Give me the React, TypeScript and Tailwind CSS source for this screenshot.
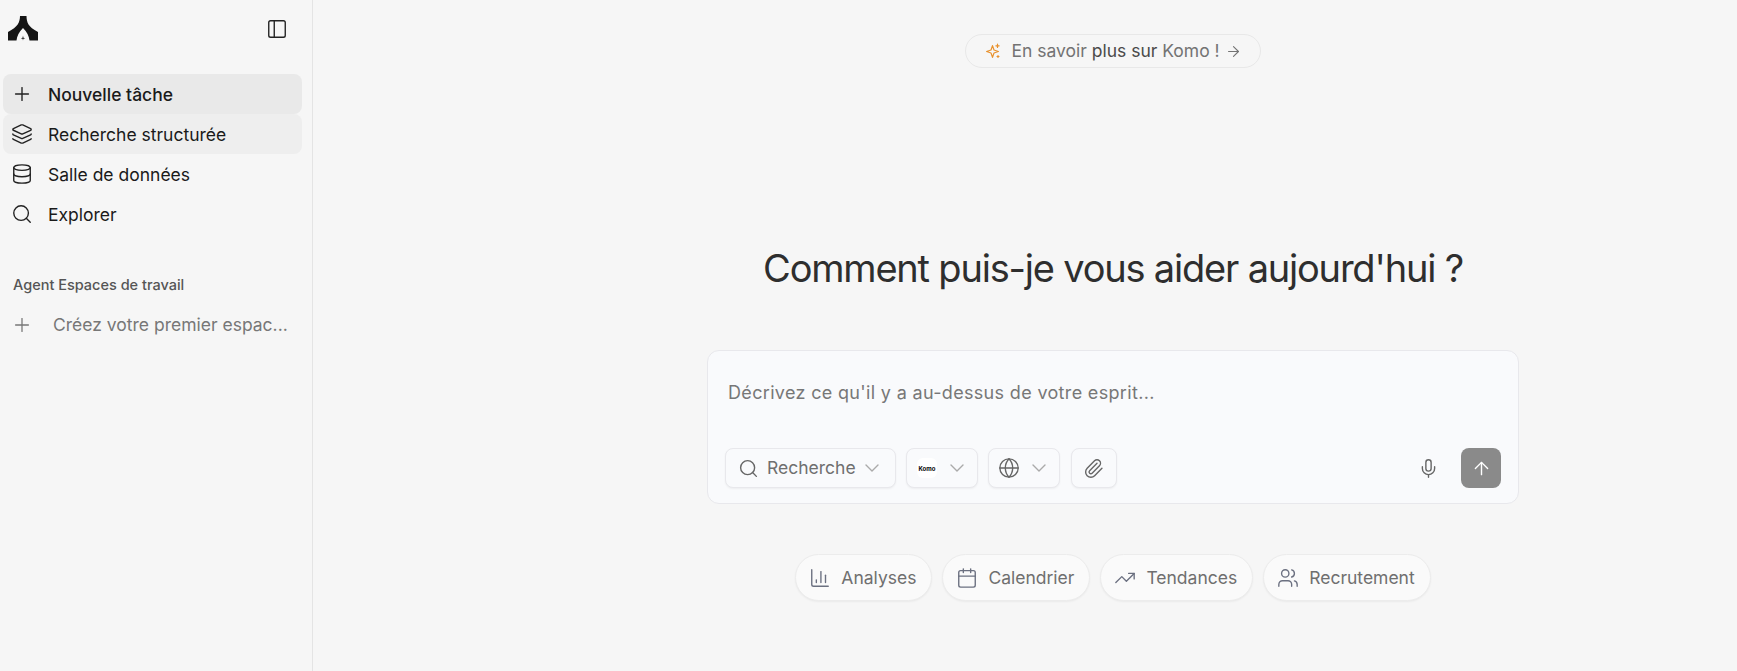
import { Plus, Layers, Database, Search, PanelLeft, ArrowRight, ChevronDown, Globe, Paperclip, Mic, ArrowUp, ChartColumn, Calendar, TrendingUp, Users } from "lucide-react";

const font = { fontFamily: "Inter, 'Liberation Sans', sans-serif" };

function Logo() {
  return (
    <svg width="30" height="25" viewBox="0 0 30 25" className="block">
      <path fill="#141414" d="M12 0H18.5C18.6 6 20 11 30 16V24.5H21.5C21 20 19 16 15 12C11 16 9 20 8.5 24.5H0V16C10 11 11.9 6 12 0Z" />
      <path fill="#141414" d="M15 19.6L15.4 21.8L17.2 22.3L15.4 22.8L15 24.6L14.6 22.8L12.8 22.3L14.6 21.8Z" />
    </svg>
  );
}

function Spark() {
  return (
    <svg width="16" height="16" viewBox="0 0 16 16" fill="none" stroke="#e8912d" strokeWidth="1.2" strokeLinejoin="round">
      <path d="M7.5 2.6L9 7L13.4 8.5L9 10L7.5 14.4L6 10L1.6 8.5L6 7Z" />
      <path d="M12.5 1.2V4.4M10.9 2.8H14.1" strokeLinecap="round" />
      <path d="M13 12.5V14.5M12 13.5H14" strokeLinecap="round" />
    </svg>
  );
}

function NavItem({ icon, label, cls }: { icon: React.ReactNode; label: string; cls: string }) {
  return (
    <div className={`flex h-10 items-center rounded-lg pl-[8px] ${cls}`}>
      <span className="flex w-[37px] shrink-0 items-center">{icon}</span>
      <span className="pt-[2px] text-[#1a1a1a]">{label}</span>
    </div>
  );
}

function Chip({ icon, label }: { icon: React.ReactNode; label: string }) {
  return (
    <div className="flex h-[47px] items-center gap-[10px] rounded-full border border-[#ececec] bg-[#fafafa] pl-[13px] pr-[15px] shadow-[0_1px_2px_rgba(0,0,0,0.05)]">
      {icon}
      <span className="pt-[1px] text-[17.5px] text-[#6f6f6f]">{label}</span>
    </div>
  );
}

function Tool({ children, cls }: { children: React.ReactNode; cls: string }) {
  return (
    <div className={`flex h-10 items-center rounded-lg border border-[#e8e8ec] bg-[#f9fafc] shadow-[0_1px_2px_rgba(0,0,0,0.05)] ${cls}`}>
      {children}
    </div>
  );
}

export default function App() {
  return (
    <div className="flex h-[671px] w-[1737px] overflow-hidden bg-[#f6f6f6]" style={font}>
      <aside className="flex w-[313px] shrink-0 flex-col border-r border-[#e4e4e4] pl-[3px] pr-[10px] text-[17.5px]">
        <div className="flex h-[74px] items-start justify-between">
          <div className="ml-[5px] mt-[16px]"><Logo /></div>
          <PanelLeft size={22} strokeWidth={1.5} color="#222" className="mr-[14px] mt-[18px]" />
        </div>
        <NavItem cls="bg-[#e9e9e9] font-medium" icon={<Plus size={22} strokeWidth={1.5} color="#222" />} label="Nouvelle tâche" />
        <NavItem cls="bg-[#eeeeee]" icon={<Layers size={22} strokeWidth={1.5} color="#222" />} label="Recherche structurée" />
        <NavItem cls="" icon={<Database size={22} strokeWidth={1.5} color="#222" />} label="Salle de données" />
        <NavItem cls="" icon={<Search size={22} strokeWidth={1.5} color="#222" />} label="Explorer" />
        <div className="mt-[41px] pl-[10px] text-[14.5px] font-medium leading-5 text-[#555555]">Agent Espaces de travail</div>
        <div className="mt-[10px] flex h-10 items-center pl-[8px]">
          <span className="flex w-[42px] shrink-0 items-center"><Plus size={22} strokeWidth={1.4} color="#777" /></span>
          <span className="text-[#777777]">Créez votre premier espac...</span>
        </div>
      </aside>
      <main className="flex min-w-0 flex-1 flex-col items-center pl-[176px]">
        <div className="mt-[34px] flex h-[34px] items-center rounded-full border border-[#e8e8e8] pl-[19px] pr-[18px] text-[17.5px] text-[#737373]">
          <Spark />
          <span className="ml-[10px]">En savoir <span className="text-[#4a4a4a]">plus sur</span> Komo !</span>
          <ArrowRight size={17} strokeWidth={1.5} color="#737373" className="ml-[5px]" />
        </div>
        <h1 className="mt-[175px] text-[38px] font-normal leading-[50px] tracking-[-1.2px] text-[#2e2e2e]">Comment puis-je vous aider aujourd'hui ?</h1>
        <div className="mt-[57px] flex h-[154px] w-[812px] flex-col rounded-xl border border-[#e8e8ec] bg-[#f9fafc] pb-[15px] pl-[17px] pr-[17px]">
          <div className="mt-[30px] pl-[3px] text-[18px] leading-6 tracking-[0.33px] text-[#777777]">Décrivez ce qu'il y a au-dessus de votre esprit...</div>
          <div className="mt-auto flex items-center">
            <Tool cls="w-[171px] pl-[12px]">
              <Search size={21} strokeWidth={1.6} color="#666" />
              <span className="ml-[8px] text-[17.5px] text-[#6f6f6f]">Recherche</span>
              <ChevronDown size={24} strokeWidth={1.4} color="#aaa" className="ml-[4px]" />
            </Tool>
            <Tool cls="ml-[10px] w-[72px] pl-[10px]">
              <span className="flex h-5 w-5 items-center justify-center rounded-md bg-white text-[6px] font-bold text-black">Komo</span>
              <ChevronDown size={24} strokeWidth={1.4} color="#aaa" className="ml-[8px]" />
            </Tool>
            <Tool cls="ml-[10px] w-[72px] pl-[9px]">
              <Globe size={22} strokeWidth={1.5} color="#666" />
              <ChevronDown size={24} strokeWidth={1.4} color="#aaa" className="ml-[7px]" />
            </Tool>
            <Tool cls="ml-[11px] w-[46px] justify-center">
              <Paperclip size={21} strokeWidth={1.6} color="#666" className="mr-[1px]" />
            </Tool>
            <Mic size={21} strokeWidth={1.6} color="#666" className="ml-auto mr-[22px]" />
            <div className="flex h-10 w-10 items-center justify-center rounded-lg bg-[#8a8a8a]">
              <ArrowUp size={21} strokeWidth={1.6} color="#fff" />
            </div>
          </div>
        </div>
        <div className="mt-[50px] flex gap-[10px]">
          <Chip label="Analyses" icon={<ChartColumn size={22} strokeWidth={1.5} color="#6b7080" />} />
          <Chip label="Calendrier" icon={<Calendar size={22} strokeWidth={1.5} color="#6b7080" />} />
          <Chip label="Tendances" icon={<TrendingUp size={22} strokeWidth={1.5} color="#6b7080" />} />
          <Chip label="Recrutement" icon={<Users size={22} strokeWidth={1.5} color="#6b7080" />} />
        </div>
      </main>
    </div>
  );
}
